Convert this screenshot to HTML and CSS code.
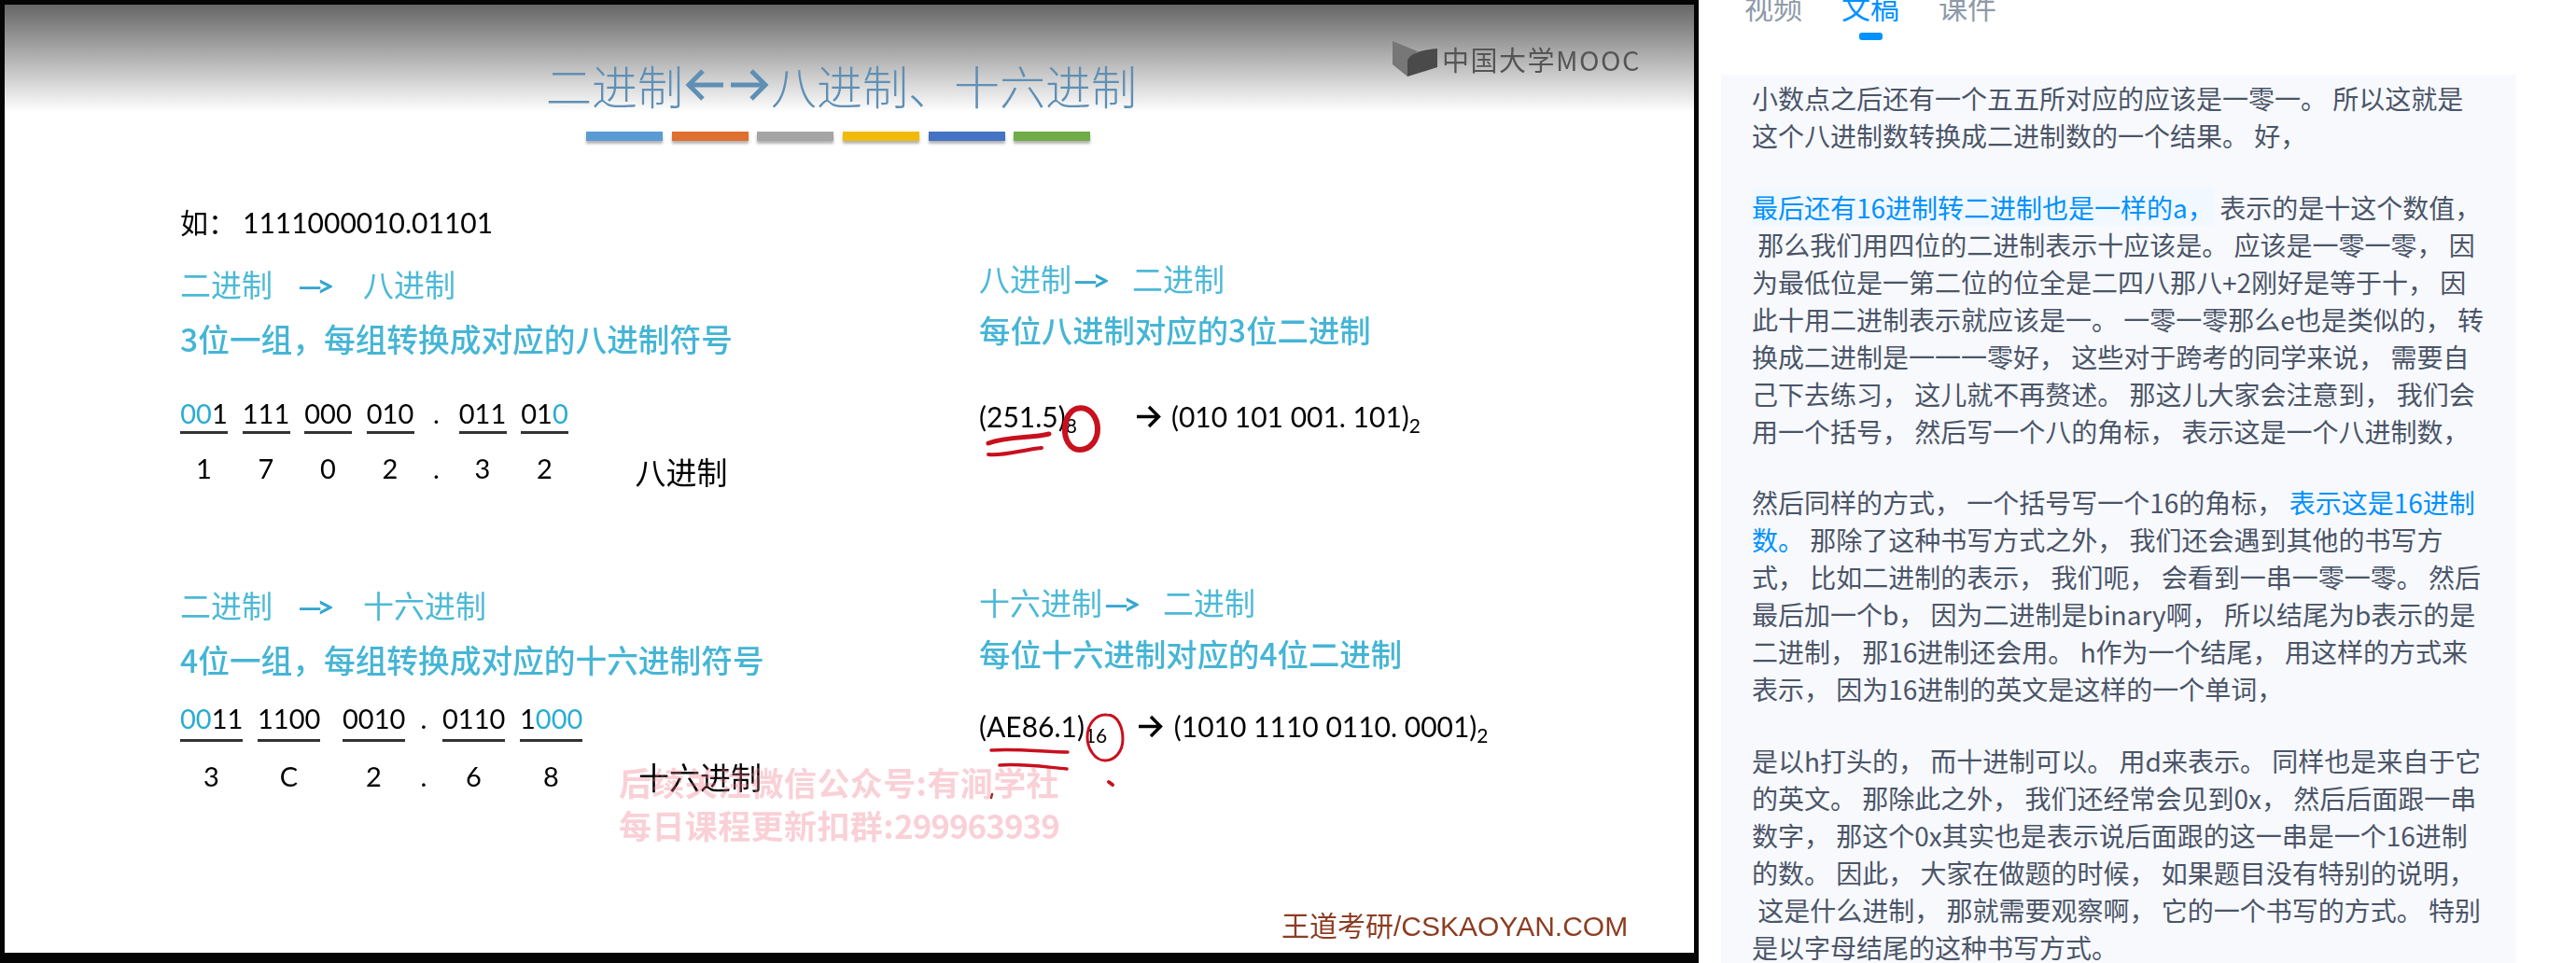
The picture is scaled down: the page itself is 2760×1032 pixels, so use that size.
FILE: index.html
```html
<!DOCTYPE html>
<html lang="zh-CN">
<head>
	<title>二进制 八进制 十六进制</title>
	<meta charset="UTF-8">
	<link rel="stylesheet" href="styles.css">
</head>
<body>
<main class="page">

	<!-- Video -->
	<section class="video">
		<div class="slide">

			<h1 class="title">二进制<svg class="title-arrows" width="92" height="36" viewBox="0 0 92 36" fill="none" stroke="currentColor" stroke-width="5"><path d="M42 18H5M20 3L5 18L20 33"/><path d="M50 18H87M72 3L87 18L72 33"/></svg>八进制、十六进制</h1>

			<div class="bars">
				<span class="bar bar-blue"></span>
				<span class="bar bar-orange"></span>
				<span class="bar bar-gray"></span>
				<span class="bar bar-yellow"></span>
				<span class="bar bar-indigo"></span>
				<span class="bar bar-green"></span>
			</div>

			<div class="board">

				<!-- Left column -->
				<div class="col-left">
					<div class="example">如：<span class="example-num">1111000010.01101</span></div>

					<div class="heading heading-first">二进制<span class="to">—&gt;</span>八进制</div>
					<div class="rule">3位一组，每组转换成对应的八进制符号</div>

					<div class="conv conv-octal">
						<div class="cell"><b><i>00</i>1</b><span>1</span></div>
						<div class="cell"><b>111</b><span>7</span></div>
						<div class="cell"><b>000</b><span>0</span></div>
						<div class="cell"><b>010</b><span>2</span></div>
						<div class="cell cell-dot"><em>.</em><span>.</span></div>
						<div class="cell"><b>011</b><span>3</span></div>
						<div class="cell"><b>01<i>0</i></b><span>2</span></div>
						<div class="cell-label">八进制</div>
					</div>

					<div class="heading heading-second">二进制<span class="to">—&gt;</span>十六进制</div>
					<div class="rule">4位一组，每组转换成对应的十六进制符号</div>

					<div class="conv conv-hex">
						<div class="cell"><b><i>00</i>11</b><span>3</span></div>
						<div class="cell"><b>1100</b><span>C</span></div>
						<div class="cell cell-wide"><b>0010</b><span>2</span></div>
						<div class="cell cell-dot"><em>.</em><span>.</span></div>
						<div class="cell"><b>0110</b><span>6</span></div>
						<div class="cell"><b>1<i>000</i></b><span>8</span></div>
						<div class="cell-label">十六进制</div>
					</div>
				</div>

				<!-- Right column -->
				<div class="col-right">
					<div class="heading heading-r1">八进制<span class="to to-tight">—&gt;</span>二进制</div>
					<div class="rule rule-r">每位八进制对应的3位二进制</div>

					<div class="formula formula-octal">
						<span>(251.5)</span><sub class="base">8</sub>
						<svg class="arrow" width="27" height="25" viewBox="0 0 27 25" fill="none" stroke="#000" stroke-width="3.4"><path d="M1 12.5H24M14 2L24.5 12.5L14 23"/></svg>
						<span>(010 101 001. 101)</span><sub>2</sub>
					</div>

					<div class="heading heading-r2">十六进制<span class="to to-tight">—&gt;</span>二进制</div>
					<div class="rule rule-r">每位十六进制对应的4位二进制</div>

					<div class="formula formula-hex">
						<span>(AE86.1)</span><sub class="base">16</sub>
						<svg class="arrow" width="27" height="25" viewBox="0 0 27 25" fill="none" stroke="#000" stroke-width="3.4"><path d="M1 12.5H24M14 2L24.5 12.5L14 23"/></svg>
						<span>(1010 1110 0110. 0001)</span><sub>2</sub>
					</div>
				</div>

			</div>

			<!-- Logo -->
			<div class="logo">
				<svg width="48" height="38" viewBox="0 0 48 38"><path fill="#777" d="M0 0L27 11L16 20V38L0 25Z"/><path fill="#4a4a4a" d="M16 20Q22 10 48 8V28L16 38Z"/></svg>
				<span>中国大学MOOC</span>
			</div>

			<!-- Watermark -->
			<div class="watermark">后续关注微信公众号:有涧学社<br>每日课程更新扣群:<span class="watermark-num">299963939</span></div>

			<div class="brand">王道考研/CSKAOYAN.COM</div>

			<!-- Pen marks -->
			<svg class="marks" width="1810" height="1016" viewBox="5 5 1810 1016" fill="none" stroke="#c8101e" stroke-linecap="round">
				<path stroke-width="5" d="M1059 475C1080 467 1105 470 1124 465"/>
				<path stroke-width="4" d="M1059 487C1075 489 1095 482 1116 480"/>
				<path stroke-width="6" d="M1153 438C1168 434 1176 448 1176 460C1176 472 1168 482 1157 482C1146 482 1140 470 1141 458C1142 447 1147 440 1153 438Z"/>
				<path stroke-width="3.5" d="M1062 804C1090 802 1120 806 1144 806"/>
				<path stroke-width="3.5" d="M1071 820C1095 818 1120 822 1143 824"/>
				<path stroke-width="3" d="M1186 766C1198 766 1203 780 1203 792C1203 806 1194 815 1184 815C1173 815 1165 802 1165 790C1165 776 1174 765 1186 766Z"/>
				<path stroke-width="4" d="M1188 838L1192 841"/>
				<path stroke-width="2.5" stroke="#9a3030" d="M1063 851L1062 855"/>
			</svg>
		</div>
	</section>

	<!-- Transcript -->
	<aside class="panel">
		<nav class="tabs">
			<a class="tab">视频</a>
			<a class="tab tab-active">文稿</a>
			<a class="tab">课件</a>
		</nav>

		<div class="transcript">
			<p>小数点之后还有一个五五所对应的应该是一零一。 所以这就是
这个八进制数转换成二进制数的一个结果。 好，</p>
			<p><mark class="hl">最后还有16进制转二进制也是一样的a，</mark> 表示的是十这个数值，
 那么我们用四位的二进制表示十应该是。 应该是一零一零， 因
为最低位是一第二位的位全是二四八那八+2刚好是等于十， 因
此十用二进制表示就应该是一。 一零一零那么e也是类似的， 转
换成二进制是一一一零好， 这些对于跨考的同学来说， 需要自
己下去练习， 这儿就不再赘述。 那这儿大家会注意到， 我们会
用一个括号， 然后写一个八的角标， 表示这是一个八进制数，</p>
			<p>然后同样的方式， 一个括号写一个16的角标， <mark class="hl">表示这是16进制
数。</mark> 那除了这种书写方式之外， 我们还会遇到其他的书写方
式， 比如二进制的表示， 我们呃， 会看到一串一零一零。 然后
最后加一个b， 因为二进制是binary啊， 所以结尾为b表示的是
二进制， 那16进制还会用。 h作为一个结尾， 用这样的方式来
表示， 因为16进制的英文是这样的一个单词，</p>
			<p>是以h打头的， 而十进制可以。 用d来表示。 同样也是来自于它
的英文。 那除此之外， 我们还经常会见到0x， 然后后面跟一串
数字， 那这个0x其实也是表示说后面跟的这一串是一个16进制
的数。 因此， 大家在做题的时候， 如果题目没有特别的说明，
 这是什么进制， 那就需要观察啊， 它的一个书写的方式。 特别
是以字母结尾的这种书写方式。</p>
		</div>
	</aside>

</main>
</body>
</html>
```

FILE: styles.css
```css
* {
	box-sizing: border-box;
}

html,
body {
	width: 100%;
	height: 100%;
	margin: 0;
	overflow: hidden;
	background: #fff;
}

body {
	font-family: "Noto Sans CJK SC", "Noto Sans", sans-serif;
}

.page {
	display: flex;
	height: 1032px;
}

/* Video */

.video {
	width: 1820px;
	height: 1032px;
	flex-shrink: 0;
	padding: 5px 5px 11px;
	background: #050505;
}

.slide {
	position: relative;
	height: 100%;
	overflow: hidden;
	background: linear-gradient(#666 0, #fff 115px) no-repeat;
	color: #000;
	font-family: Lato, "Noto Sans CJK SC", sans-serif;
	filter: blur(.5px);
}

.title {
	display: flex;
	align-items: center;
	height: 48px;
	margin: 62px 0 0;
	padding-left: 580px;
	font-family: "Noto Sans CJK SC", sans-serif;
	font-size: 49px;
	font-weight: 300;
	line-height: 48px;
	color: #5f8fb4;
	white-space: nowrap;
}

.title-arrows {
	flex-shrink: 0;
	margin: 0 1px;
}

.bars {
	display: flex;
	gap: 9.7px;
	margin-top: 26px;
	padding-left: 623px;
}

.bar {
	width: 82px;
	height: 10px;
	box-shadow: 0 3px 3px rgba(0, 0, 0, .3);
}

.bar-blue { background: #5b9bd5; }
.bar-orange { background: #e0702f; }
.bar-gray { background: #a5a5a5; }
.bar-yellow { background: #f2bb0c; }
.bar-indigo { background: #4472c4; }
.bar-green { background: #70ad47; }

.board {
	display: grid;
	grid-template-columns: 856px 1fr;
	margin-top: 67px;
	padding-left: 188px;
}

.example {
	height: 40px;
	font-size: 30px;
	line-height: 40px;
	white-space: nowrap;
}

.example-num {
	margin-left: 7px;
}

.heading,
.rule {
	height: 44px;
	font-family: "Noto Sans CJK SC", sans-serif;
	font-size: 33px;
	line-height: 44px;
	color: #4db9d6;
	white-space: nowrap;
}

.rule {
	margin-top: 15px;
	font-size: 33.7px;
	font-weight: 500;
	color: #45b5d5;
}

.rule-r {
	margin-top: 11px;
	font-size: 33.4px;
}

.to {
	display: inline-block;
	width: 46px;
	margin: 0 24px 0 27px;
	font-family: Lato, sans-serif;
	font-weight: 700;
	letter-spacing: -6px;
	color: #35a7cf;
}

.to-tight {
	margin: 0 17px 0 2px;
}

.heading-first { margin-top: 24px; }
.heading-second { margin-top: 106px; }
.heading-r1 { margin-top: 58px; }
.heading-r2 { margin-top: 157px; }

.conv {
	display: flex;
	font-size: 29px;
	line-height: 36px;
}

.conv-octal {
	gap: 15.5px;
	margin-top: 40px;
}

.conv-hex {
	gap: 16px;
	margin-top: 23px;
}

.cell {
	display: flex;
	flex-direction: column;
	align-items: center;
	width: 51px;
}

.conv-hex .cell {
	width: 67px;
}

.conv-hex .cell-wide {
	margin-left: 8px;
}

.conv .cell-dot {
	width: 17px;
}

.conv-hex .cell-dot {
	width: 8px;
}

.cell b,
.cell em {
	display: block;
	width: 100%;
	padding-bottom: 1px;
	border-bottom: 3px solid #333;
	font-style: normal;
	font-weight: 400;
	text-align: center;
}

.conv-hex .cell b,
.conv-hex .cell em {
	padding-bottom: 4px;
}

.cell em {
	border-bottom-color: transparent;
}

.cell i {
	font-style: normal;
	color: #29acd3;
}

.cell span {
	margin-top: 19px;
}

.cell-label {
	align-self: flex-end;
	font-family: "Noto Sans CJK SC", sans-serif;
	font-size: 33px;
	line-height: 36px;
	white-space: nowrap;
}

.conv-octal .cell-label {
	margin: 0 0 -3px 56px;
}

.conv-hex .cell-label {
	margin-left: 44px;
}

.formula {
	display: flex;
	align-items: center;
	height: 40px;
	font-size: 30px;
	white-space: nowrap;
}

.formula sub {
	align-self: flex-end;
	font-size: 21px;
	line-height: 20px;
}

.formula-octal { margin-top: 51px; }
.formula-hex { margin-top: 36px; }

.formula-octal .arrow { margin: 0 11px 0 63px; }
.formula-hex .arrow { margin: 0 12px 0 32.5px; }

.logo {
	position: absolute;
	top: 37px;
	left: 1487px;
	display: flex;
	align-items: center;
	gap: 5px;
	font-family: "Noto Sans CJK SC", sans-serif;
	font-size: 29px;
	letter-spacing: 1.5px;
	color: #555;
	white-space: nowrap;
}

.watermark {
	position: absolute;
	top: 810px;
	left: 658px;
	font-family: "Noto Sans CJK SC", sans-serif;
	font-size: 35px;
	font-weight: 700;
	line-height: 46px;
	letter-spacing: .4px;
	color: rgba(240, 120, 140, .35);
	white-space: nowrap;
}

.watermark-num {
	letter-spacing: -1px;
}

.brand {
	position: absolute;
	top: 970px;
	left: 1368px;
	font-family: "Liberation Sans", "Noto Sans CJK SC", sans-serif;
	font-size: 30px;
	line-height: 36px;
	color: #8c3d22;
	white-space: nowrap;
}

.marks {
	position: absolute;
	top: 0;
	left: 0;
}

/* Transcript */

.panel {
	flex: 1;
	min-width: 0;
}

.tabs {
	display: flex;
	gap: 42px;
	height: 80px;
	padding-left: 49px;
	overflow: hidden;
}

.tab {
	position: relative;
	height: 46px;
	margin-top: -9px;
	font-size: 31px;
	line-height: 31px;
	color: #8e9aa9;
}

.tab-active {
	color: #0091ff;
}

.tab-active::after {
	content: "";
	position: absolute;
	left: 19px;
	top: 44px;
	width: 25px;
	height: 8px;
	border-radius: 3px;
	background: #0091ff;
}

.transcript {
	width: 852px;
	height: 952px;
	margin-left: 24px;
	padding: 5px 0 0 33px;
	overflow: hidden;
	background: #f7f9fd;
	font-size: 28px;
	line-height: 40px;
	color: #4b5568;
}

.transcript p {
	margin: 0 0 36.5px;
	white-space: pre;
}

.hl {
	background: transparent;
	color: #0091ff;
}

.transcript p:nth-child(2) .hl {
	background: #f1f8ff;
}
```
